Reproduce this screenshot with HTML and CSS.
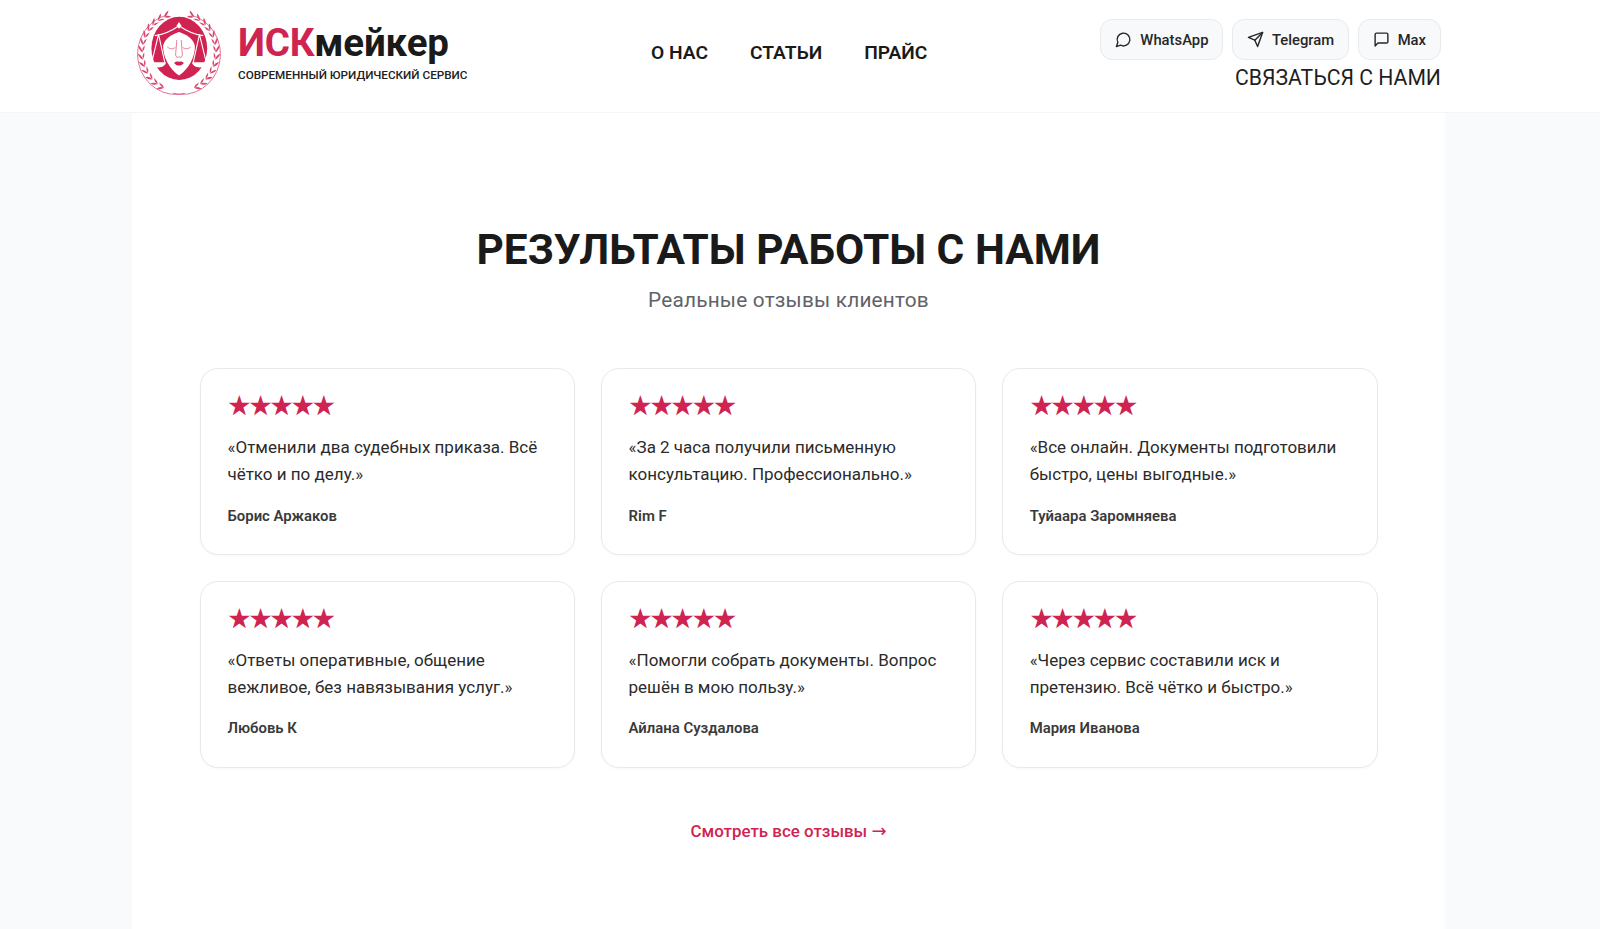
FILE: index.html
```html
<!DOCTYPE html>
<html lang="ru">
<head>
<meta charset="utf-8">
<title>ИСКмейкер</title>
<link rel="stylesheet" href="styles.css">
</head>
<body>
<header class="site-header">
  <div class="header-inner">
    <a class="brand" href="#">
      <svg class="logo" viewBox="8 20 284 284" aria-hidden="true">
        <defs>
          <g id="sprig">
            <path d="M150 35q8-12 22-13q-6 12-22 13Z"/>
            <path d="M150 35q9 9 22 9q-7-10-22-9Z"/>
          </g>
          <g id="half">
            <path class="stem" d="M108 40A127 127 0 0 0 170 292"/>
            <use href="#sprig" transform="rotate(-24 150 160)"/>
            <use href="#sprig" transform="rotate(-35 150 160)"/>
            <use href="#sprig" transform="rotate(-46 150 160)"/>
            <use href="#sprig" transform="rotate(-57 150 160)"/>
            <use href="#sprig" transform="rotate(-68 150 160)"/>
            <use href="#sprig" transform="rotate(-79 150 160)"/>
            <use href="#sprig" transform="rotate(-90 150 160)"/>
            <use href="#sprig" transform="rotate(-101 150 160)"/>
            <use href="#sprig" transform="rotate(-112 150 160)"/>
            <use href="#sprig" transform="rotate(-123 150 160)"/>
            <use href="#sprig" transform="rotate(-134 150 160)"/>
            <use href="#sprig" transform="rotate(-145 150 160)"/>
            <use href="#sprig" transform="rotate(-156 150 160)"/>
          </g>
        </defs>
        <g class="wreath" transform="translate(150 0) scale(.95 1) translate(-150 0)">
          <use href="#half"/>
          <use href="#half" transform="translate(300 0) scale(-1 1)"/>
        </g>
        <ellipse class="disc" cx="151" cy="147" rx="90" ry="102"/>
        <path class="face" d="M150 94C126 102 103 116 99 138 96 172 120 216 150 235 180 216 204 172 201 138 197 116 174 102 150 94Z"/>
        <g class="scales">
          <path d="M72 106C105 102 130 88 150 74 170 88 195 102 228 106"/>
          <path d="M84 102 62 192M84 102 104 192M216 102 238 192M216 102 196 192"/>
        </g>
        <path class="white" d="M58 192H108C106 214 62 214 58 192ZM192 192H242C240 214 194 214 192 192ZM150 62 158 74 150 84 142 74Z"/>
        <g class="features">
          <path d="M112 142C120 150 130 150 138 144M162 144C170 150 180 150 188 142"/>
          <path d="M143 120 139 168C140 176 147 178 150 174 153 178 160 176 161 168L157 120"/>
        </g>
        <path class="lips" d="M134 194C141 189 147 189 150 191 153 189 159 189 166 194 158 205 142 205 134 194Z"/>
      </svg>
      <div class="brand-text">
        <div class="brand-name"><span class="accent">ИСК</span>мейкер</div>
        <div class="brand-sub">СОВРЕМЕННЫЙ ЮРИДИЧЕСКИЙ СЕРВИС</div>
      </div>
    </a>
    <nav class="main-nav">
      <a href="#">О НАС</a>
      <a href="#">СТАТЬИ</a>
      <a href="#">ПРАЙС</a>
    </nav>
    <div class="contacts">
      <div class="messengers">
        <a class="pill" href="#">
          <svg viewBox="0 0 24 24" class="pill-icon"><path d="M7.9 20A9 9 0 1 0 4 16.1L2 22Z"/></svg>WhatsApp
        </a>
        <a class="pill" href="#">
          <svg viewBox="0 0 24 24" class="pill-icon"><path d="M22 2 11 13"/><path d="M22 2 15 22 11 13 2 9Z"/></svg>Telegram
        </a>
        <a class="pill" href="#">
          <svg viewBox="0 0 24 24" class="pill-icon"><path d="M21 15a2 2 0 0 1-2 2H7l-4 4V5a2 2 0 0 1 2-2h14a2 2 0 0 1 2 2z"/></svg>Max
        </a>
      </div>
      <a class="contact-link" href="#">СВЯЗАТЬСЯ С НАМИ</a>
    </div>
  </div>
</header>
<main class="sheet">
  <h1 class="title">РЕЗУЛЬТАТЫ РАБОТЫ С НАМИ</h1>
  <p class="subtitle">Реальные отзывы клиентов</p>
  <section class="reviews">
    <article class="card">
      <div class="stars">★★★★★</div>
      <p class="quote">«Отменили два судебных приказа. Всё чётко и по делу.»</p>
      <div class="author">Борис Аржаков</div>
    </article>
    <article class="card">
      <div class="stars">★★★★★</div>
      <p class="quote">«За 2 часа получили письменную консультацию. Профессионально.»</p>
      <div class="author">Rim F</div>
    </article>
    <article class="card">
      <div class="stars">★★★★★</div>
      <p class="quote">«Все онлайн. Документы подготовили быстро, цены выгодные.»</p>
      <div class="author">Туйаара Заромняева</div>
    </article>
    <article class="card">
      <div class="stars">★★★★★</div>
      <p class="quote">«Ответы оперативные, общение вежливое, без навязывания услуг.»</p>
      <div class="author">Любовь К</div>
    </article>
    <article class="card">
      <div class="stars">★★★★★</div>
      <p class="quote">«Помогли собрать документы. Вопрос решён в мою пользу.»</p>
      <div class="author">Айлана Суздалова</div>
    </article>
    <article class="card">
      <div class="stars">★★★★★</div>
      <p class="quote">«Через сервис составили иск и претензию. Всё чётко и быстро.»</p>
      <div class="author">Мария Иванова</div>
    </article>
  </section>
  <div class="more"><a href="#">Смотреть все отзывы <span class="arrow">→</span></a></div>
</main>
</body>
</html>
```
FILE: styles.css
```css
* { box-sizing: border-box; }
html, body { height: 100%; }
body {
  margin: 0;
  height: 929px;
  overflow: hidden;
  background: #f9fafb;
  color: #1a1a1a;
  font-family: Roboto, "Liberation Sans", sans-serif;
}
a { color: inherit; text-decoration: none; }

.site-header {
  height: 113px;
  background: #fff;
  border-bottom: 1px solid #f5f5f6;
}
.header-inner {
  margin-left: 132px;
  width: 1313px;
  height: 112px;
  padding: 0 4px 0 3px;
  display: flex;
  justify-content: space-between;
  position: relative;
}
.brand { display: flex; align-items: flex-start; gap: 15px; padding-top: 9px; }
.logo { width: 88px; height: 88px; flex: none; }
.wreath { fill: #d8476f; }
.stem { fill: none; stroke: #d8476f; stroke-width: 2.5; }
.disc { fill: #cf2352; }
.face, .white { fill: #fff; }
.scales path { fill: none; stroke: #fff; stroke-width: 3.5; }
.features path { fill: none; stroke: #cf2352; stroke-width: 1.8; }
.lips { fill: #cf2352; }

.brand-text { padding-top: 11px; }
.brand-name { font-size: 38.5px; font-weight: 700; line-height: 46px; letter-spacing: -.2px; }
.accent { color: #cf2352; }
.brand-sub { font-size: 11.7px; font-weight: 500; line-height: 16px; margin-top: 1px; color: #222; }

.main-nav {
  display: flex;
  gap: 42px;
  position: absolute;
  left: 519px;
  top: 41px;
  font-size: 19.2px;
  font-weight: 600;
  line-height: 24px;
}
.contacts { display: flex; flex-direction: column; align-items: flex-end; padding-top: 19px; }
.messengers { display: flex; gap: 8.5px; }
.pill {
  display: flex;
  align-items: center;
  gap: 8px;
  height: 41px;
  padding: 0 14px;
  background: #f8f9fa;
  border: 1px solid #e8eaec;
  border-radius: 12px;
  font-size: 14.8px;
  font-weight: 500;
  color: #27272a;
}
.pill-icon { width: 17px; height: 17px; fill: none; stroke: #27272a; stroke-width: 2; stroke-linecap: round; stroke-linejoin: round; }
.contact-link { font-size: 21.2px; line-height: 26px; margin-top: 5px; color: #1f1f1f; }

.sheet {
  margin-left: 132px;
  width: 1313px;
  height: 816px;
  background: #fff;
  padding-top: 111px;
}
.title {
  margin: 0;
  text-align: center;
  font-size: 42.4px;
  line-height: 52px;
  font-weight: 700;
  color: #1a1a1a;
}
.subtitle {
  margin: 10px 0 0;
  text-align: center;
  font-size: 20.8px;
  line-height: 28px;
  color: #5f6368;
  letter-spacing: .2px;
}
.reviews {
  margin: 54px 67.5px 0 68px;
  display: grid;
  grid-template-columns: repeat(3, 1fr);
  gap: 25.7px;
}
.card {
  height: 187px;
  padding: 22px 26px 22px 26.5px;
  border: 1px solid #e9e9eb;
  border-radius: 18px;
  background: #fff;
  box-shadow: 0 1px 3px rgba(0, 0, 0, .03);
}
.stars { font-size: 27.5px; line-height: 28px; color: #cf2352; font-family: "DejaVu Sans", sans-serif; letter-spacing: -3.5px; margin-left: -.5px; }
.quote { margin: 15px 0 0; font-size: 17px; line-height: 27.3px; color: #2b2b2b; }
.author { margin-top: 17px; font-size: 14.9px; line-height: 20px; font-weight: 600; color: #3a3a3a; }
.more { margin-top: 51px; text-align: center; font-size: 16.9px; line-height: 24px; font-weight: 500; color: #cf2352; }
.arrow { font-family: "DejaVu Sans", sans-serif; font-size: 18px; font-weight: 400; }
```
